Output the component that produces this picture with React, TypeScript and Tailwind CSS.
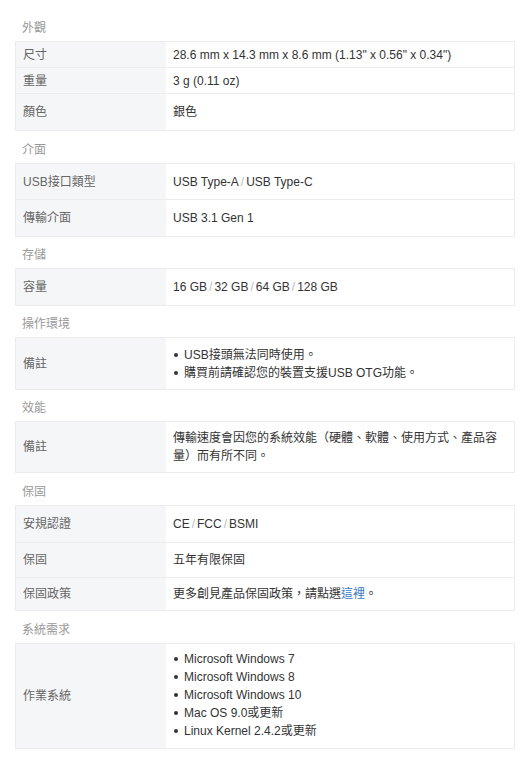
import React from "react";

const font = { fontFamily: '"Liberation Sans", Arial, "Noto Sans CJK TC", sans-serif' };

function Slash() {
  return <span className="text-[#bbb] px-[2px]">/</span>;
}

function Bullets({ items }: { items: React.ReactNode[] }) {
  return (
    <div className="flex flex-col">
      {items.map((it, i) => (
        <div key={i} className="flex items-center h-[18px]">
          <span className="w-[4px] h-[4px] rounded-full bg-[#333] ml-[1px] mr-[6px] shrink-0" />
          <span>{it}</span>
        </div>
      ))}
    </div>
  );
}

type Row = { label: string; value: React.ReactNode; h: string };

function Section({ title, rows, hh }: { title: string; rows: Row[]; hh: string }) {
  return (
    <div>
      <div className={`${hh} flex items-end pl-[7px] text-[12px] leading-[20px] text-[#999]`}>
        <div className="pb-[3px]">{title}</div>
      </div>
      <div className="border border-[#ececec]">
        {rows.map((r, i) => (
          <div key={i} className={`flex ${r.h} ${i > 0 ? "border-t border-[#ececec]" : ""}`}>
            <div className="w-[150px] shrink-0 bg-[#f5f6f8] flex items-center pl-[7px] text-[12px] text-[#666]">
              {r.label}
            </div>
            <div className="flex-1 flex items-center pl-[7px] pr-[10px] text-[12px] leading-[18px] text-[#333]">
              {r.value}
            </div>
          </div>
        ))}
      </div>
    </div>
  );
}

export default function App() {
  return (
    <div className="bg-white w-[528px] min-h-[768px] pl-[15px] pr-[13px]" style={font}>
      <Section
        title="外觀"
        hh="h-[41px]"
        rows={[
          { label: "尺寸", value: '28.6 mm x 14.3 mm x 8.6 mm (1.13" x 0.56" x 0.34")', h: "h-[25px]" },
          { label: "重量", value: "3 g (0.11 oz)", h: "h-[26px]" },
          { label: "顏色", value: "銀色", h: "h-[37px]" },
        ]}
      />
      <Section
        title="介面"
        hh="h-[32px]"
        rows={[
          {
            label: "USB接口類型",
            value: (
              <span>
                USB Type-A<Slash />USB Type-C
              </span>
            ),
            h: "h-[35px]",
          },
          { label: "傳輸介面", value: "USB 3.1 Gen 1", h: "h-[37px]" },
        ]}
      />
      <Section
        title="存儲"
        hh="h-[31px]"
        rows={[
          {
            label: "容量",
            value: (
              <span>
                16 GB<Slash />32 GB<Slash />64 GB<Slash />128 GB
              </span>
            ),
            h: "h-[36px]",
          },
        ]}
      />
      <Section
        title="操作環境"
        hh="h-[31px]"
        rows={[
          {
            label: "備註",
            value: <Bullets items={["USB接頭無法同時使用。", "購買前請確認您的裝置支援USB OTG功能。"]} />,
            h: "h-[51px]",
          },
        ]}
      />
      <Section
        title="效能"
        hh="h-[31px]"
        rows={[
          {
            label: "備註",
            value: <span>傳輸速度會因您的系統效能（硬體、軟體、使用方式、產品容量）而有所不同。</span>,
            h: "h-[50px]",
          },
        ]}
      />
      <Section
        title="保固"
        hh="h-[32px]"
        rows={[
          {
            label: "安規認證",
            value: (
              <span>
                CE<Slash />FCC<Slash />BSMI
              </span>
            ),
            h: "h-[36px]",
          },
          { label: "保固", value: "五年有限保固", h: "h-[35px]" },
          {
            label: "保固政策",
            value: (
              <span>
                更多創見產品保固政策，請點選<span className="text-[#3a78c3]">這裡</span>。
              </span>
            ),
            h: "h-[33px]",
          },
        ]}
      />
      <Section
        title="系統需求"
        hh="h-[32px]"
        rows={[
          {
            label: "作業系統",
            value: (
              <div className="-mt-[3px]">
                <Bullets
                  items={[
                    "Microsoft Windows 7",
                    "Microsoft Windows 8",
                    "Microsoft Windows 10",
                    "Mac OS 9.0或更新",
                    "Linux Kernel 2.4.2或更新",
                  ]}
                />
              </div>
            ),
            h: "h-[104px]",
          },
        ]}
      />
    </div>
  );
}
